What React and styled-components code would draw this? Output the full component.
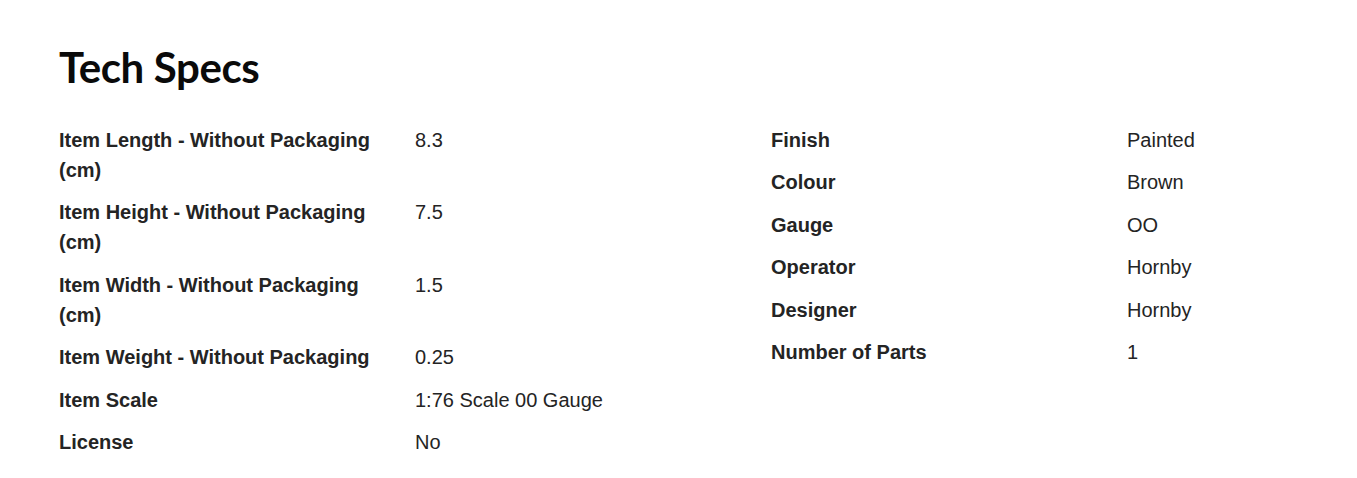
import React from "react";
import styled, { createGlobalStyle } from "styled-components";

const Global = createGlobalStyle`
  html, body { margin: 0; padding: 0; background: #fff; }
  body { overflow: hidden; }
`;

const Section = styled.section`
  padding: 40px 0 0 59px;
  font-family: "Liberation Sans", Arial, sans-serif;
  color: #242424;
`;

const Title = styled.h2`
  margin: 0 0 25px 0;
  font-family: Lato, "Open Sans", sans-serif;
  font-weight: 700;
  font-size: 42px;
  line-height: 54px;
  color: #0a0a0a;
  letter-spacing: -0.4px;
`;

const Columns = styled.div`
  display: grid;
  grid-template-columns: 712px 1fr;
  align-items: start;
`;

const Table = styled.dl`
  margin: 0;
  display: grid;
  grid-template-columns: 356px 1fr;
`;

const Label = styled.dt`
  font-weight: 700;
  font-size: 20px;
  line-height: 30px;
  padding: 6px 20px 6.4px 0;
  margin: 0;
`;

const Value = styled.dd`
  font-weight: 400;
  font-size: 20px;
  line-height: 30px;
  padding: 6px 0 6.4px 0;
  margin: 0;
`;

const left = [
  ["Item Length - Without Packaging (cm)", "8.3"],
  ["Item Height - Without Packaging (cm)", "7.5"],
  ["Item Width - Without Packaging (cm)", "1.5"],
  ["Item Weight - Without Packaging", "0.25"],
  ["Item Scale", "1:76 Scale 00 Gauge"],
  ["License", "No"],
];

const right = [
  ["Finish", "Painted"],
  ["Colour", "Brown"],
  ["Gauge", "OO"],
  ["Operator", "Hornby"],
  ["Designer", "Hornby"],
  ["Number of Parts", "1"],
];

const SpecTable = ({ rows }) => (
  <Table>
    {rows.map(([k, v]) => (
      <React.Fragment key={k}>
        <Label>{k}</Label>
        <Value>{v}</Value>
      </React.Fragment>
    ))}
  </Table>
);

export default function App() {
  return (
    <>
      <Global />
      <Section>
        <Title>Tech Specs</Title>
        <Columns>
          <SpecTable rows={left} />
          <SpecTable rows={right} />
        </Columns>
      </Section>
    </>
  );
}
